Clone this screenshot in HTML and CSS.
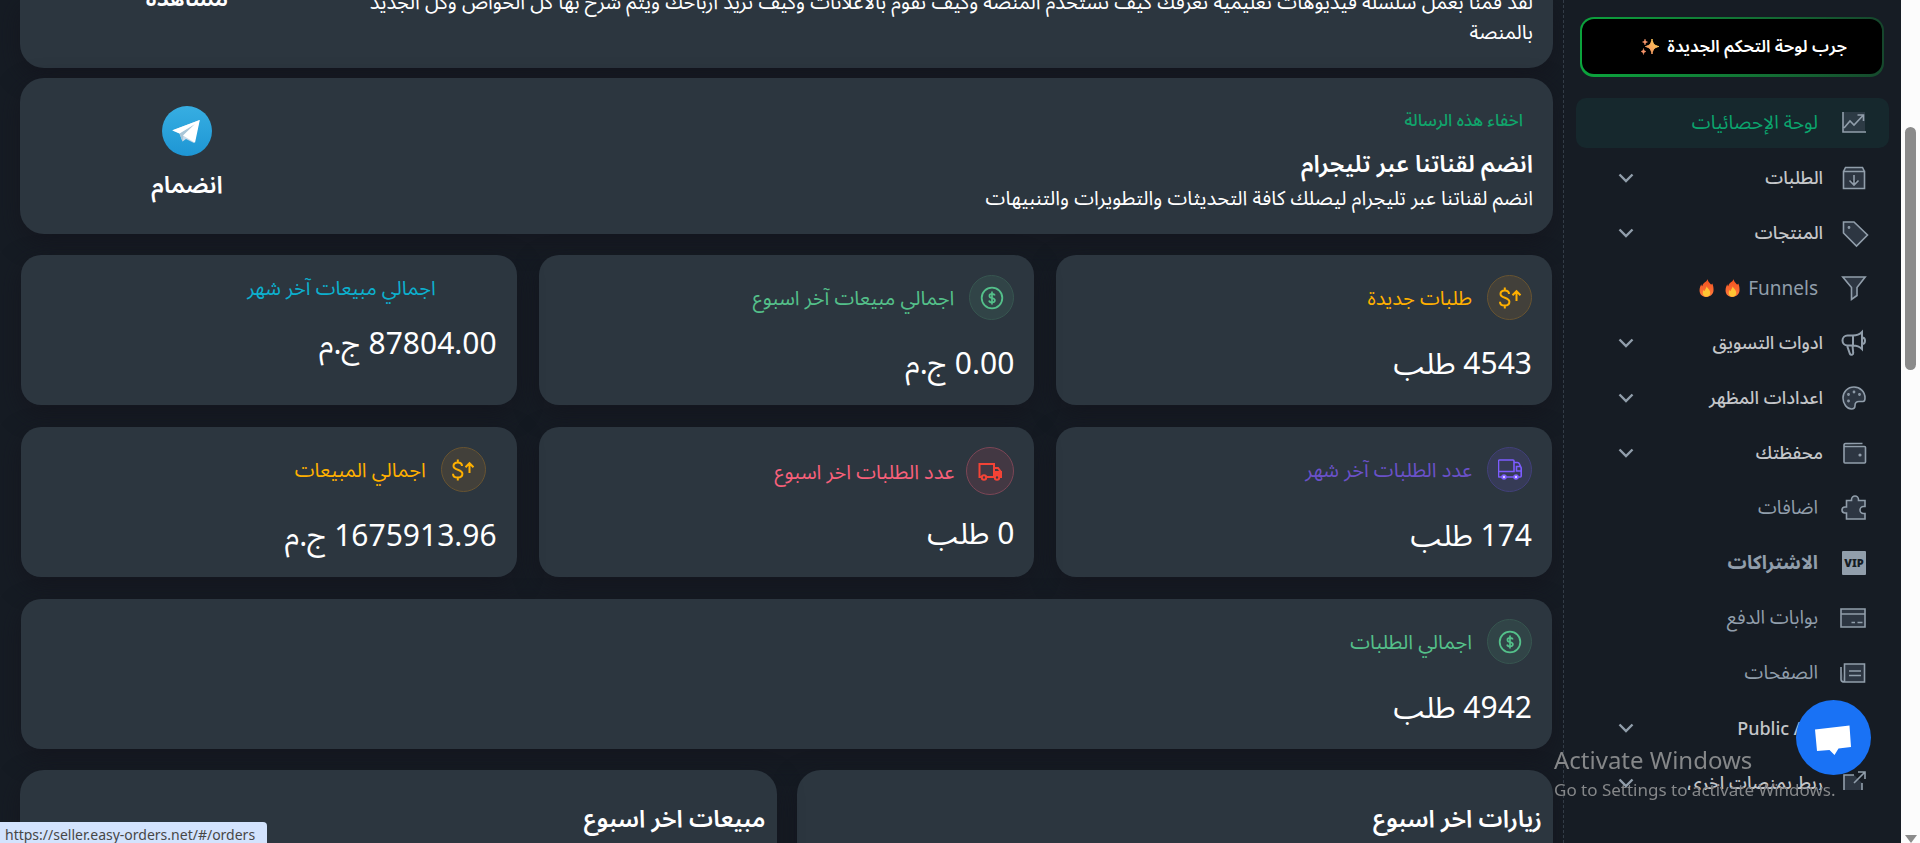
FILE: index.html
```html
<!DOCTYPE html>
<html lang="ar">
<head>
<meta charset="utf-8">
<title>لوحة الإحصائيات</title>
<link rel="stylesheet" href="styles.css">
</head>
<body>
<svg class="defs" aria-hidden="true">
  <defs>
    <linearGradient id="tg" x1="0" y1="0" x2="0" y2="1"><stop offset="0" stop-color="#37aee2"/><stop offset="1" stop-color="#1e96d4"/></linearGradient>
    <linearGradient id="flame" x1="0" y1="0" x2="0" y2="1"><stop offset="0" stop-color="#f4511e"/><stop offset="1" stop-color="#ff7a3d"/></linearGradient>
    <linearGradient id="star" x1="1" y1="0" x2="0" y2="1"><stop offset="0" stop-color="#ffd34d"/><stop offset="1" stop-color="#f58a6b"/></linearGradient>
    <symbol id="chev" viewBox="0 0 16 16"><path d="M1.500 4.500l6.500 6.500 6.500-6.500" fill="none" stroke="#919eab" stroke-width="2.400"/></symbol>
    <symbol id="fire" viewBox="0 0 16 20"><path d="M9 .5c.4 2.600 2.200 3.800 3.400 5.500C14 6.500 14 5.500 14 5c1.300 2.500 1.600 4.800 1.500 7.500-.2 4.200-3.300 7-7.500 7S.7 16.800.6 12.800C.5 10 1.600 7.500 2.500 6c.1 1 .3 1.700.9 2.200C4 5.500 6 4 7.500 3.100 8.300 2.500 8.900 1.500 9 .5z" fill="url(#flame)"/><path d="M8.200 8c.2 2 3.800 3.400 3.800 7 0 2.600-1.700 4.200-4 4.200s-4-1.500-4-4c0-1.400.5-2.300 1-3 .3.700.6 1 1.100 1.100C6.400 11 8 10 8.200 8z" fill="#ffc533"/></symbol>
    <symbol id="dollar" viewBox="0 0 24 24"><circle cx="12" cy="12" r="10.300" fill="none" stroke="#54c08a" stroke-width="1.800"/><path d="M12 5.500v13M14.700 9.500c-.2-1-1.200-1.600-2.700-1.600-1.600 0-2.600.8-2.600 2s1 1.800 2.600 2.100c1.700.4 2.900.9 2.900 2.300s-1.200 2.200-2.900 2.200c-1.600 0-2.700-.8-2.900-2" fill="none" stroke="#54c08a" stroke-width="1.700"/></symbol>
    <symbol id="dollar-up" viewBox="0 0 24 24"><path d="M6.800 1.500v3M6.800 19.500v3M11 8c0-2.200-1.500-3.600-4.200-3.600S2.500 5.900 2.500 8c0 4.600 8.900 3 8.900 7.800 0 2.300-1.900 3.800-4.600 3.800S2 18.100 2 15.700M18.500 15V5.500M14.500 9.200l4-4 4 4" fill="none" stroke="#ffb000" stroke-width="2"/></symbol>
  </defs>
</svg>
<div class="shell">
  <main class="main" dir="rtl">
    <section class="banner banner-cut">
      <p class="banner-text">لقد قمنا بعمل سلسلة فيديوهات تعليمية تعرفك كيف تستخدم المنصة وكيف تقوم بالاعلانات وكيف تزيد ارباحك ويتم شرح بها كل الخواص وكل الجديد<br>بالمنصة</p>
      <a class="banner-action" href="#watch">مشاهدة</a>
    </section>
    <section class="banner">
      <div class="banner-body">
        <button class="hide-btn" type="button">اخفاء هذه الرسالة</button>
        <h2 class="banner-title">انضم لقناتنا عبر تليجرام</h2>
        <p class="banner-text">انضم لقناتنا عبر تليجرام ليصلك كافة التحديثات والتطويرات والتنبيهات</p>
      </div>
      <a class="banner-action" href="#join">
        <svg class="telegram" viewBox="0 0 50 50"><circle cx="25" cy="25" r="25" fill="url(#tg)"/><path d="M10.300 24.500L37.500 14 32 37l-8-4-3.500 2.500-3-8z" fill="#c8daea"/><path d="M20.500 35.500l-3-8L33 18 21.500 29.500z" fill="#a9c6d8"/><path d="M10.300 24.300L37.800 14 33 36.700 21 29.500 33 18 17.500 27.600z" fill="#fff"/></svg>
        <span>انضمام</span>
      </a>
    </section>

    <section class="stats">
      <article class="card amber">
        <header class="card-head"><span class="badge"><svg viewBox="0 0 24 24"><use href="#dollar-up"/></svg></span><h3>طلبات جديدة</h3></header>
        <p class="value">4543 طلب</p>
      </article>
      <article class="card green">
        <header class="card-head"><span class="badge"><svg viewBox="0 0 24 24"><use href="#dollar"/></svg></span><h3>اجمالي مبيعات آخر اسبوع</h3></header>
        <p class="value">0.00 ج.م</p>
      </article>
      <article class="card cyan">
        <header class="card-head head-plain"><h3>اجمالي مبيعات آخر شهر</h3></header>
        <p class="value">87804.00 ج.م</p>
      </article>
      <article class="card purple">
        <header class="card-head"><span class="badge"><svg viewBox="0 0 24 24" fill="none" stroke="#7c5cff" stroke-width="1.600"><path d="M4 19H1.500a1 1 0 0 1-1-1V3a1 1 0 0 1 1-1H15a1 1 0 0 1 1 1v10.500H.5M8 19h8.500M16 4.500h3.500a2 2 0 0 1 1.800 1.200L23.200 10V18a1 1 0 0 1-1 1H20M23 8.500h-4.500v4.500H23"/><circle cx="6" cy="19" r="2" fill="#d9d0ff"/><circle cx="18" cy="19" r="2" fill="#d9d0ff"/></svg></span><h3>عدد الطلبات آخر شهر</h3></header>
        <p class="value">174 طلب</p>
      </article>
      <article class="card red">
        <header class="card-head"><span class="badge"><svg viewBox="0 0 24 24" fill="none" stroke="#f44336" stroke-width="2"><path d="M4 18H1.500V5H16v13H8"/><path d="M16 9h4l3 4v5h-1M16 18h1"/><path d="M16 13h7v4h-7z" fill="#f44336"/><circle cx="6" cy="18.500" r="2.200"/><circle cx="19" cy="18.500" r="2.200" fill="#433843"/></svg></span><h3>عدد الطلبات اخر اسبوع</h3></header>
        <p class="value">0 طلب</p>
      </article>
      <article class="card amber">
        <header class="card-head head-inset"><span class="badge"><svg viewBox="0 0 24 24"><use href="#dollar-up"/></svg></span><h3>اجمالي المبيعات</h3></header>
        <p class="value">1675913.96 ج.م</p>
      </article>
      <article class="card green card-wide">
        <header class="card-head"><span class="badge"><svg viewBox="0 0 24 24"><use href="#dollar"/></svg></span><h3>اجمالي الطلبات</h3></header>
        <p class="value">4942 طلب</p>
      </article>
    </section>

    <section class="charts">
      <article class="chart"><h2>زيارات اخر اسبوع</h2></article>
      <article class="chart"><h2>مبيعات اخر اسبوع</h2></article>
    </section>
  </main>

  <aside class="sidebar" dir="rtl">
    <a class="try" href="#new"><span class="try-in">جرب لوحة التحكم الجديدة
      <svg class="spark" viewBox="0 0 18 18"><path d="M11 1c.8 4.800 2.200 6.500 6.800 7.500-4.600 1-6 3-6.800 7.500-.8-4.500-2.200-6.500-6.500-7.500C8.800 7.500 10.200 5.800 11 1z" fill="url(#star)" stroke="url(#star)"/><path d="M4 1c.3 1.800.9 2.500 2.500 3C4.900 4.400 4.300 5.200 4 7 3.700 5.200 3.100 4.400 1.500 4 3.100 3.500 3.700 2.800 4 1zM2.500 10.500c.3 1.800.9 2.500 2.500 3-1.600.4-2.200 1.200-2.500 3-.3-1.800-.9-2.600-2.500-3 1.600-.5 2.200-1.200 2.500-3z" fill="#f6956a" stroke="#f6956a" stroke-width=".5"/></svg></span></a>
    <nav class="nav">
      <a class="item active" href="#stats"><svg class="ico" viewBox="0 0 24 24"><path d="M1 1h22v20H1z" fill="#2d3b45" stroke="none"/><path d="M1 1v20h23M2 17l6-7 4 4L21 4.500M15.500 4H21.500v6" fill="none"/></svg><span class="label">لوحة الإحصائيات</span></a>
      <a class="item group" href="#orders"><svg class="ico" viewBox="0 0 24 24"><path d="M1.500 5.500h21v17h-21zM1.500 5.500l2-4h17l2 4M12 9v10M7.500 14.500L12 19l4.500-4.500"/></svg><span class="label">الطلبات</span><svg class="chev"><use href="#chev"/></svg></a>
      <a class="item group" href="#products"><svg class="ico" viewBox="0 0 24 24"><path d="M1.500 1h10.500L25.500 14 14.500 25 1.500 12z"/><circle cx="7" cy="6.500" r=".6"/></svg><span class="label">المنتجات</span><svg class="chev"><use href="#chev"/></svg></a>
      <a class="item" href="#funnels"><svg class="ico" viewBox="0 0 24 24"><path d="M.8 1h22.400L15 11.500v8L9.500 23.500v-12z"/></svg><span class="label">Funnels <svg class="fire"><use href="#fire"/></svg> <svg class="fire"><use href="#fire"/></svg></span></a>
      <a class="item group" href="#marketing"><svg class="ico bold" viewBox="0 0 24 24"><path d="M20 1v17c-2.500-2.500-6-3.500-9-3.500H5.500a5 5 0 0 1 0-10H11c3 0 6.500-1 9-3.500zM11 4.500v10M5 14.500L8 23c.8 1.500 3.500.8 3.200-1L10.500 14.500M20 6.500c4 0 4 6.500 0 6.500" fill="none"/></svg><span class="label">ادوات التسويق</span><svg class="chev"><use href="#chev"/></svg></a>
      <a class="item group" href="#theme"><svg class="ico" viewBox="0 0 24 24"><path d="M12 1C5.500 1 1 6 1 12s4 11 8.500 11c2.500 0 3.500-1.500 3.500-3.500 0-2.500 1.500-4 4-4h4c1.500 0 2-1.500 2-3.500C23 5.500 18 1 12 1z"/><circle cx="12" cy="6" r=".6"/><circle cx="6.500" cy="8.500" r=".6"/><circle cx="17.500" cy="8.500" r=".6"/><circle cx="6.500" cy="15" r=".6"/></svg><span class="label">اعدادات المظهر</span><svg class="chev"><use href="#chev"/></svg></a>
      <a class="item group" href="#wallet"><svg class="ico" viewBox="0 0 24 24"><path d="M2 4.500V21a1 1 0 0 0 1 1h19.500a1 1 0 0 0 1-1V6.500a1 1 0 0 0-1-1H3a1 1 0 0 1-1-1C2 3 2.500 2.500 3.500 2.500h17"/><circle cx="18" cy="14" r=".8"/></svg><span class="label">محفظتك</span><svg class="chev"><use href="#chev"/></svg></a>
      <a class="item" href="#addons"><svg class="ico" viewBox="0 0 24 24"><path d="M4.500 4.500H9.500V3.500a3.500 3.500 0 0 1 7 0v1H23v6h-1.500a3.500 3.500 0 0 0 0 7H23V23H4.500v-6H3a3 3 0 0 1 0-6h1.500z"/></svg><span class="label">اضافات</span></a>
      <a class="item strong" href="#plans"><svg class="ico" viewBox="0 0 24 24"><rect class="vip-box" width="24" height="24" rx="1"/><text class="vip" x="12" y="16" direction="ltr">VIP</text></svg><span class="label">الاشتراكات</span></a>
      <a class="item" href="#gateways"><svg class="ico wide" viewBox="0 0 26 24"><path d="M1 3h24v18H1zM1 8h24M11.500 16.500h3.500M17.500 16.500H22.500"/></svg><span class="label">بوابات الدفع</span></a>
      <a class="item" href="#pages"><svg class="ico wide" viewBox="0 0 26 24"><path d="M4.500 3h20v18h-20zM9 10h12M9 14.500h12M4.500 21C2 21 1 20 1 18.500V6"/></svg><span class="label">الصفحات</span></a>
      <a class="item group" href="#api"><svg class="ico" viewBox="0 0 24 24"><path d="M3 3h18v18H3z"/></svg><span class="label">Public API</span><svg class="chev"><use href="#chev"/></svg></a>
      <a class="item group" href="#link"><svg class="ico" viewBox="0 0 24 24"><path d="M20 12v10H2V4h10"/><path d="M16 1h7v7M23 1L12 12" fill="none"/></svg><span class="label">ربط بمنصات اخرى</span><svg class="chev"><use href="#chev"/></svg></a>
    </nav>
  </aside>

  <div class="scroll" aria-hidden="true"><span class="thumb"></span><span class="arrow"></span></div>
</div>

<button class="chat" type="button" aria-label="chat"><svg viewBox="0 0 36 30"><path d="M0 4.500L34.500.5 36 22 23.500 23.500 19.500 30 14.500 25 2 26z" fill="#fff"/></svg></button>
<div class="watermark"><p class="wm-title">Activate Windows</p><p class="wm-text">Go to Settings to activate Windows.</p></div>
<div class="status">https://seller.easy-orders.net/#/orders</div>
</body>
</html>
```
FILE: styles.css
```css
* { box-sizing: border-box; }
body {
  margin: 0;
  background: #161c24;
  color: #fff;
  font-family: "Noto Sans", "Noto Sans Arabic", "DejaVu Sans", sans-serif;
  font-size: 16px;
}
h2, h3, p { margin: 0; }
a { color: inherit; text-decoration: none; }
.defs { position: absolute; width: 0; height: 0; }

.shell { display: flex; height: 100vh; overflow: hidden; }
.main { flex: 1; min-width: 0; padding: 0 10px 0 20px; overflow: hidden; }

/* banners */
.banner {
  display: flex;
  justify-content: space-between;
  margin-bottom: 10px;
  padding: 26px 20px 21px 0;
  border-radius: 24px;
  background: #2c363f;
  box-shadow: 0 8px 24px rgba(20, 20, 28, .7);
}
.banner-cut { padding-top: 0; align-items: flex-start; border-radius: 0 0 24px 24px; }
.banner-text { font-size: 20px; line-height: 30px; }
.banner-cut .banner-text { margin-top: -13px; white-space: nowrap; }
.banner-action {
  display: flex;
  flex-direction: column;
  align-items: center;
  width: 334px;
  font-size: 24px;
  font-weight: 600;
  line-height: 30px;
}
.banner-cut .banner-action { margin-top: -18px; }
.telegram { width: 50px; height: 50px; margin: 2px 0 13px; }
.banner-title { margin-top: 7px; font-size: 24px; font-weight: 600; line-height: 36px; }
.banner-body .banner-text { margin-top: 2px; }
.hide-btn {
  display: block;
  height: 34px;
  padding: 0 10px 3px;
  border: 0;
  background: none;
  color: #10a56b;
  font: 500 17px/28px "Noto Sans", "Noto Sans Arabic", "DejaVu Sans", sans-serif;
}

/* statistic cards */
.stats {
  display: grid;
  grid-template-columns: repeat(3, 1fr);
  gap: 22px;
  margin: 21px 1px 21px;
}
.card {
  padding: 20px;
  border-radius: 20px;
  background: #2c363f;
  box-shadow: 0 8px 24px rgba(20, 20, 28, .7);
}
.card-wide { grid-column: 1 / -1; }
.card-head { display: flex; align-items: center; gap: 15px; margin-bottom: 20px; }
.card-head h3 { font-size: 20px; font-weight: 400; line-height: 25px; }
.head-plain { padding-right: 61px; }
.head-inset { padding-right: 11px; }
.badge {
  display: grid;
  place-items: center;
  width: 45px;
  height: 45px;
  border: 1px solid;
  border-radius: 50%;
}
.badge svg { width: 24px; height: 24px; }
.value { font-size: 30px; line-height: 45px; }
.amber h3 { color: #ffb000; }
.amber .badge { background: #42403a; border-color: #685431; }
.green h3 { color: #54c08a; }
.green .badge { background: #314447; border-color: #375650; }
.cyan h3 { color: #0cb0ce; }
.purple h3 { color: #6a51c8; }
.purple .badge { background: #363b56; border-color: #42407a; }
.red h3 { color: #f8607a; }
.red .badge { width: 48px; height: 48px; background: #433843; border-color: #7c4656; }
.red .card-head { gap: 12px; margin-bottom: 15px; }

.charts { display: grid; grid-template-columns: 1fr 1fr; gap: 20px; }
.chart {
  min-height: 320px;
  padding: 30px 11px;
  border-radius: 24px;
  background: #2c363f;
  box-shadow: 0 8px 24px rgba(20, 20, 28, .7);
}
.chart h2 { font-size: 24px; font-weight: 600; line-height: 36px; }

/* sidebar */
.sidebar {
  width: 338px;
  padding: 17px 12px 53px;
  border-left: 1px dashed #333c47;
  display: flex;
  flex-direction: column;
}
.try {
  display: block;
  margin: 0 5px 21px 4px;
  padding: 2px 2px 3px;
  border-radius: 14px;
  background: linear-gradient(80deg, #0ba53d, #136f34 60%, #16452c);
}
.try-in {
  display: flex;
  align-items: center;
  gap: 8px;
  height: 55px;
  padding-right: 35px;
  border-radius: 12px;
  background: #000;
  font-size: 17px;
  font-weight: 600;
}
.spark { width: 18px; height: 18px; overflow: visible; }
.nav { display: flex; flex: 1; flex-direction: column; gap: 5px; min-height: 0; overflow: hidden; }
.item {
  display: flex;
  flex: none;
  align-items: center;
  height: 50px;
  padding: 0 23px 0 42px;
  border-radius: 10px;
  color: #919eab;
  font-size: 19px;
}
.label { margin-right: 24px; }
.active { background: #16282d; color: #0ba56d; }
.group { color: #c4c6c9; font-size: 18px; font-weight: 500; }
.group .label { margin-right: 19px; }
.strong { font-weight: 700; }
.ico {
  width: 24px;
  height: 24px;
  overflow: visible;
  fill: #2d3642;
  stroke: #919eab;
  stroke-width: 1.6;
}
.bold { stroke-width: 2; }
.wide { width: 26px; }
.wide + .label { margin-right: 22px; }
.vip-box { fill: #919eab; stroke: none; }
.vip { fill: #161c24; stroke: none; font-size: 11px; font-weight: 900; text-anchor: middle; }
.chev { width: 16px; height: 16px; margin-right: auto; }
.fire { width: 15px; height: 20px; margin: 0 3px; vertical-align: -3px; }

/* page scrollbar */
.scroll {
  display: flex;
  flex-direction: column;
  justify-content: space-between;
  align-items: center;
  width: 19px;
  padding-top: 127px;
  background: #fcfcfc;
}
.thumb { width: 11px; height: 243px; border-radius: 6px; background: #8b8b8b; }
.arrow { border: 6px solid transparent; border-top: 8px solid #8b8b8b; border-bottom: 0; }

/* floating layers */
.chat {
  position: fixed;
  right: 49px;
  bottom: 68px;
  display: grid;
  place-items: center;
  width: 75px;
  height: 75px;
  padding: 4px 2px 0 0;
  border: 0;
  border-radius: 50%;
  background: #1972f5;
}
.chat svg { width: 36px; height: 30px; }
.watermark { position: fixed; right: 79px; bottom: 40px; width: 287px; color: #858789; white-space: nowrap; }
.wm-title { font-size: 24px; line-height: 34px; }
.wm-text { font-size: 17px; line-height: 26px; }
.status {
  position: fixed;
  left: 0;
  bottom: 0;
  width: 267px;
  height: 21px;
  padding-left: 5px;
  border-radius: 0 4px 0 0;
  background: #d3e3fd;
  color: #474747;
  font-size: 14px;
  line-height: 26px;
  overflow: hidden;
}
```
